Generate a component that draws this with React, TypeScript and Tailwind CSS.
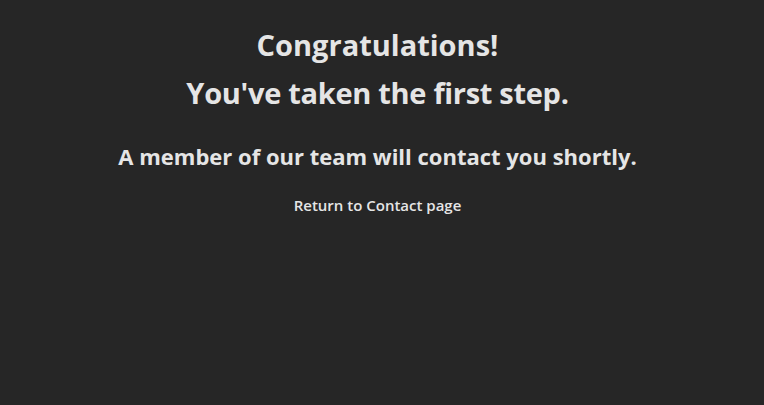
export default function App() {
  return (
    <div className="min-h-[405px] w-full bg-[#262626] text-[#e5e5e5] font-['Open_Sans',sans-serif]">
      <main className="flex flex-col items-center pt-[21px] pr-[9px] text-center">
        <h1 className="text-[29px] font-bold leading-[48px]">
          Congratulations!
          <br />
          <span className="tracking-[-0.3px]">You've taken the first step.</span>
        </h1>
        <h2 className="mt-[23px] text-[22px] font-bold leading-[32px]">
          A member of our team will contact you shortly.
        </h2>
        <a href="#" className="mt-[23px] text-[15px] font-semibold leading-[20px] text-[#e5e5e5]">
          Return to Contact page
        </a>
      </main>
    </div>
  )
}
